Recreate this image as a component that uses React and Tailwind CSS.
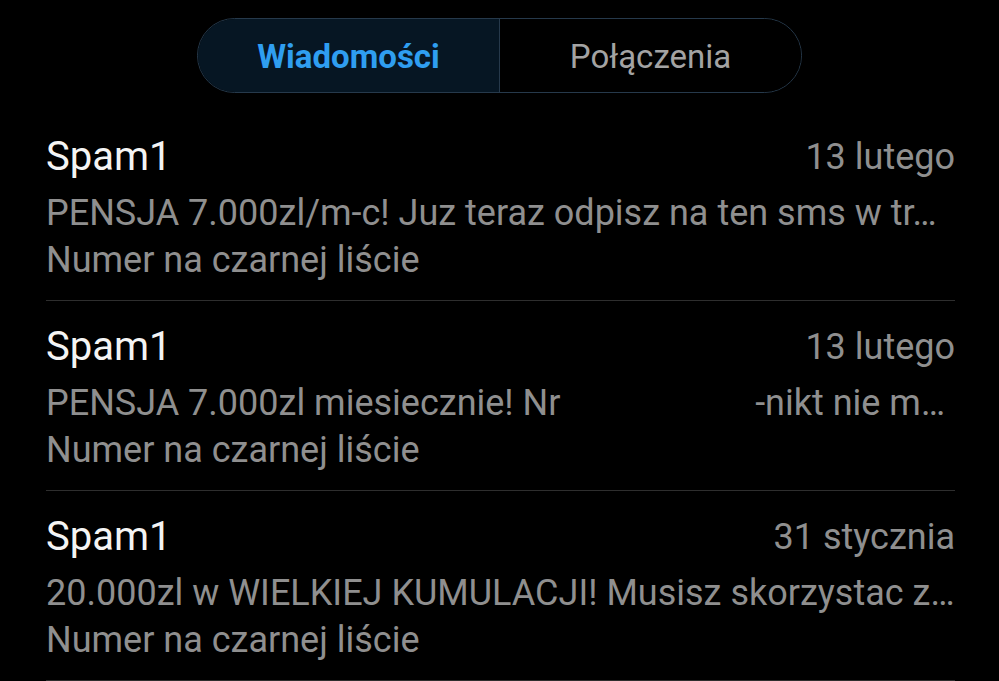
import React from 'react';

const messages = [
  {
    id: 1,
    name: 'Spam1',
    date: '13 lutego',
    preview: 'PENSJA 7.000zl/m-c! Juz teraz odpisz na ten sms w tr…',
  },
  {
    id: 2,
    name: 'Spam1',
    date: '13 lutego',
    preview: 'PENSJA 7.000zl miesiecznie! Nr',
    tail: '-nikt nie m…',
  },
  {
    id: 3,
    name: 'Spam1',
    date: '31 stycznia',
    preview: '20.000zl w WIELKIEJ KUMULACJI! Musisz skorzystac z…',
  },
];

const MessageRow = ({ msg }) => (
  <div className="border-b border-[#2e2e2e] pt-[18px] pb-[21px]">
    <div className="flex h-[56px] items-center justify-between">
      <span className="text-[40px] text-[#f4f4f4]">{msg.name}</span>
      <span className="text-[36px] text-[#8f8f8f]">{msg.date}</span>
    </div>
    <div className="flex h-[56px] items-center justify-between whitespace-nowrap pr-[10px] text-[36px] text-[#8f8f8f]">
      <span>{msg.preview}</span>
      {msg.tail && <span>{msg.tail}</span>}
    </div>
    <div className="flex h-[38px] items-center text-[36px] text-[#8f8f8f]">
      Numer na czarnej liście
    </div>
  </div>
);

export default function App() {
  return (
    <div
      className="h-[681px] w-[999px] overflow-hidden bg-black"
      style={{ fontFamily: 'Roboto, "Liberation Sans", sans-serif' }}
    >
      <div className="pt-[18px]">
        <div className="mx-auto flex h-[75px] w-[605px] overflow-hidden rounded-full border-[1.5px] border-[#26394b]">
          <div className="flex flex-1 items-center justify-center border-r-[1.5px] border-[#26394b] bg-[#061623] pt-[3px] text-[33px] font-bold text-[#2f9ef0]">
            Wiadomości
          </div>
          <div className="flex flex-1 items-center justify-center bg-black pt-[3px] text-[33px] text-[#a3a3a3]">
            Połączenia
          </div>
        </div>
      </div>
      <div className="mt-[18px] pl-[46px] pr-[44px]">
        {messages.map((m) => (
          <MessageRow key={m.id} msg={m} />
        ))}
      </div>
    </div>
  );
}
